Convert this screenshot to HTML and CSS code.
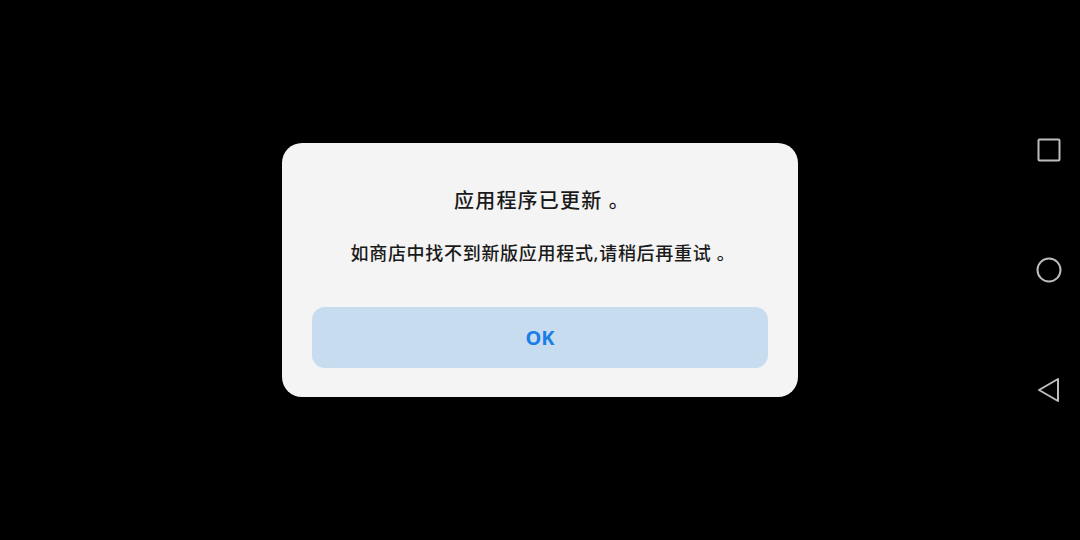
FILE: index.html
```html
<!DOCTYPE html>
<html lang="zh-CN">
<head>
<meta charset="UTF-8" />
<meta name="viewport" content="width=device-width, initial-scale=1" />
<title>应用程序已更新</title>
<link rel="stylesheet" href="styles.css">
</head>
<body>

<div class="screen">
  <div class="stage">
    <div class="dialog">
      <h1 class="title">应用程序已更新 。</h1>
      <p class="message">如商店中找不到新版应用程式,请稍后再重试 。</p>
      <button class="ok-btn" type="button">OK</button>
    </div>
  </div>

  <div class="navbar">
    <svg class="nav-icon" width="26" height="26" viewBox="0 0 26 26">
      <rect x="2.5" y="2.5" width="21" height="21" rx="1" fill="none" stroke="#bdbdbd" stroke-width="2"/>
    </svg>
    <svg class="nav-icon" width="26" height="26" viewBox="0 0 26 26">
      <circle cx="13" cy="13" r="11.5" fill="none" stroke="#bdbdbd" stroke-width="2"/>
    </svg>
    <svg class="nav-icon" width="26" height="26" viewBox="0 0 26 26">
      <path d="M22 2 L22 24 L3 13 Z" fill="none" stroke="#bdbdbd" stroke-width="2" stroke-linejoin="round"/>
    </svg>
  </div>
</div>

</body>
</html>
```

FILE: styles.css
```css
body {
  margin: 0;
  padding: 0;
  background: #000;
  font-family: "Noto Sans", "Noto Sans CJK SC", sans-serif;
}
.screen {
  width: 1080px;
  height: 540px;
  display: flex;
}
.stage {
  flex: 1;
  padding-top: 143px;
  padding-left: 282px;
}
.dialog {
  width: 516px;
  height: 254px;
  box-sizing: border-box;
  background: #f4f4f4;
  border-radius: 20px;
  padding: 40px 30px 0;
  text-align: center;
}
.title {
  margin: 0 0 0 4px;
  font-size: 20px;
  font-weight: 500;
  letter-spacing: 1.2px;
  line-height: 36px;
  color: #1a1a1a;
}
.message {
  margin: 21px 0 0 6px;
  font-size: 18px;
  font-weight: 500;
  letter-spacing: 0.7px;
  line-height: 26px;
  color: #1a1a1a;
}
.ok-btn {
  margin-top: 41px;
  width: 100%;
  height: 61px;
  border: none;
  border-radius: 13px;
  background: #c8dcf0;
  color: #1a7fe6;
  font-family: "Noto Sans", sans-serif;
  font-size: 20px;
  font-weight: 700;
  cursor: pointer;
}
.navbar {
  width: 62px;
  display: flex;
  flex-direction: column;
  align-items: center;
  padding-top: 137px;
  gap: 94px;
}
```
